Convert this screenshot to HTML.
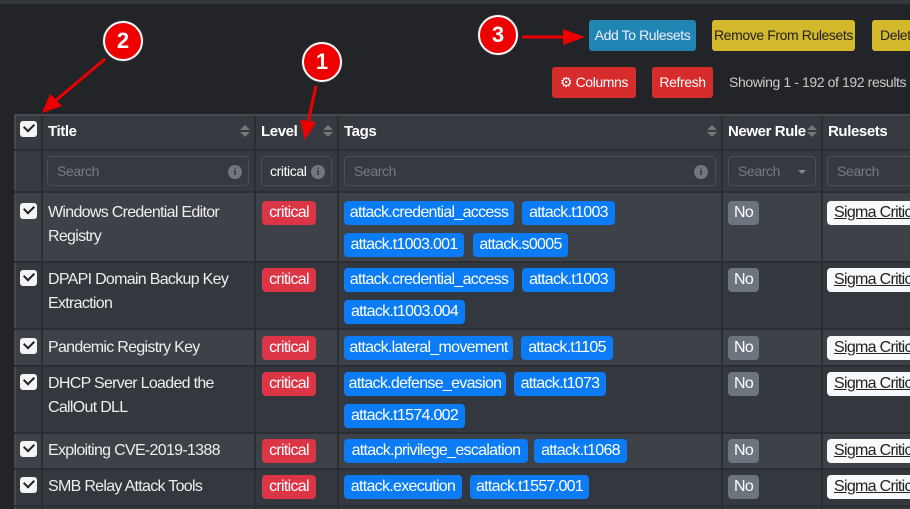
<!DOCTYPE html>
<html><head><meta charset="utf-8"><style>
*{margin:0;padding:0;box-sizing:border-box}
body{width:910px;height:509px;overflow:hidden;background:#222428;font-family:"Liberation Sans Narrow","Liberation Sans",sans-serif;color:#f0f0f0;position:relative;letter-spacing:-0.4px}
.a{position:absolute}
.b{position:absolute;border-radius:4px;font-size:16px;letter-spacing:-0.7px;line-height:24px;height:24px;text-align:center;white-space:nowrap;overflow:hidden}
.tag{background:#0b7cf5;color:#fff}
.crit{background:#dc3545;color:#fff;left:262px;width:54px}
.no{background:#6c757d;color:#fff;left:728px;width:31px}
.sig{background:#f8f9fa;color:#222;left:827px;width:100px;text-align:left;padding-left:7px;text-decoration:underline}
.t{position:absolute;left:48px;font-size:16px;letter-spacing:-0.7px;line-height:24px;color:#eee;white-space:nowrap}
.cb{position:absolute;left:20px;width:17px;height:16px;background:#f4f4f4;border-radius:3px}
.cb:after{content:"";position:absolute;left:4px;top:2px;width:8px;height:5px;border-left:2.5px solid #222;border-bottom:2.5px solid #222;transform:rotate(-45deg)}
.btn{position:absolute;border-radius:3px;font-size:14px;line-height:31px;height:31px;text-align:center;white-space:nowrap;overflow:hidden}
.inp{position:absolute;top:156px;height:30px;border:1px solid #4a4f55;border-radius:4px;font-size:14px;line-height:28px;color:#777c82;padding-left:9px;white-space:nowrap}
.info{position:absolute;top:8px;width:14px;height:14px;border-radius:50%;background:#72777d;color:#343a40;font-size:11px;line-height:14px;text-align:center;font-weight:bold;font-family:"Liberation Serif",serif;letter-spacing:0}
.h{position:absolute;top:114px;font-size:15px;font-weight:bold;line-height:36px;color:#fff;white-space:nowrap}
.sort{position:absolute;top:126px;width:0;height:0}
.sort:before{content:"";position:absolute;left:-5px;top:-1px;border:5px solid transparent;border-bottom:5px solid #777;border-top:0}
.sort:after{content:"";position:absolute;left:-5px;top:6px;border:5px solid transparent;border-top:5px solid #777;border-bottom:0}
.circ{position:absolute;width:40px;height:40px;border-radius:50%;background:#ee0000;border:2px solid #fff;box-shadow:0 0 0 1px #333;color:#fff;font:bold 22px/36px "Liberation Sans",sans-serif;text-align:center;letter-spacing:0}
</style></head><body>
<div class="a" style="left:0;top:0;width:910px;height:4px;background:#34383d"></div>
<div class="btn" style="left:589px;top:20px;width:107px;background:#2185b3;color:#eef">Add To Rulesets</div>
<div class="btn" style="left:712px;top:20px;width:143px;background:#d4b82b;color:#222">Remove From Rulesets</div>
<div class="btn" style="left:872px;top:20px;width:60px;background:#d4b82b;color:#222;text-align:left;padding-left:8px">Delete</div>
<div class="btn" style="left:552px;top:67px;width:84px;background:#d62c2c;color:#fff">⚙ Columns</div>
<div class="btn" style="left:652px;top:67px;width:61px;background:#d62c2c;color:#fff">Refresh</div>
<div class="a" style="left:729px;top:67px;font-size:14px;line-height:31px;color:#ccc;white-space:nowrap">Showing 1 - 192 of 192 results</div>
<div class="a" style="left:14px;top:114px;width:900px;height:395px;background:#2b2f34"></div>
<div class="a" style="left:14px;top:114px;width:900px;height:78px;background:#343a40"></div>
<div class="a" style="left:14px;top:193px;width:900px;height:69px;background:#3d4148"></div>
<div class="a" style="left:14px;top:262px;width:900px;height:67px;background:#33373e"></div>
<div class="a" style="left:14px;top:329px;width:900px;height:37px;background:#3d4148"></div>
<div class="a" style="left:14px;top:366px;width:900px;height:67px;background:#33373e"></div>
<div class="a" style="left:14px;top:433px;width:900px;height:36px;background:#3d4148"></div>
<div class="a" style="left:14px;top:469px;width:900px;height:40px;background:#33373e"></div>
<div class="a" style="left:14px;top:114px;width:2px;height:395px;background:#454a50"></div>
<div class="a" style="left:41px;top:114px;width:2px;height:395px;background:#2a2e33"></div>
<div class="a" style="left:254px;top:114px;width:2px;height:395px;background:#2a2e33"></div>
<div class="a" style="left:337px;top:114px;width:2px;height:395px;background:#2a2e33"></div>
<div class="a" style="left:721px;top:114px;width:2px;height:395px;background:#2a2e33"></div>
<div class="a" style="left:821px;top:114px;width:2px;height:395px;background:#2a2e33"></div>
<div class="a" style="left:14px;top:114px;width:900px;height:2px;background:#454a50"></div>
<div class="a" style="left:14px;top:149px;width:900px;height:2px;background:#2a2e33"></div>
<div class="a" style="left:14px;top:191px;width:900px;height:2px;background:#2a2e33"></div>
<div class="a" style="left:14px;top:261px;width:900px;height:2px;background:#2a2e33"></div>
<div class="a" style="left:14px;top:328px;width:900px;height:2px;background:#2a2e33"></div>
<div class="a" style="left:14px;top:365px;width:900px;height:2px;background:#2a2e33"></div>
<div class="a" style="left:14px;top:432px;width:900px;height:2px;background:#2a2e33"></div>
<div class="a" style="left:14px;top:468px;width:900px;height:2px;background:#2a2e33"></div>
<div class="a" style="left:14px;top:505px;width:900px;height:2px;background:#2a2e33"></div>
<div class="cb" style="top:121px"></div>
<div class="h" style="left:48px">Title</div><div class="sort" style="left:245px"></div>
<div class="h" style="left:261px">Level</div><div class="sort" style="left:328px"></div>
<div class="h" style="left:344px">Tags</div><div class="sort" style="left:712px"></div>
<div class="h" style="left:728px">Newer Rule</div><div class="sort" style="left:812px"></div>
<div class="h" style="left:828px">Rulesets</div>
<div class="inp" style="left:47px;width:202px">Search<div class="info" style="left:180px">i</div></div>
<div class="inp" style="left:261px;width:71px;color:#fff;padding-left:8px">critical<div class="info" style="left:49px">i</div></div>
<div class="inp" style="left:344px;width:372px">Search<div class="info" style="left:349px">i</div></div>
<div class="inp" style="left:728px;width:88px">Search<span style="position:absolute;left:69px;top:13px;border:4px solid transparent;border-top:4px solid #888"></span></div>
<div class="inp" style="left:827px;width:100px">Search</div>

<div class="cb" style="top:203px"></div><div class="t" style="top:201px">Windows Credential Editor<br>Registry</div>
<div class="b crit" style="top:201px">critical</div>
<div class="b tag" style="left:344px;top:201px;width:170px">attack.credential_access</div>
<div class="b tag" style="left:522px;top:201px;width:93px">attack.t1003</div>
<div class="b tag" style="left:344px;top:233px;width:120px">attack.t1003.001</div>
<div class="b tag" style="left:473px;top:233px;width:95px">attack.s0005</div>
<div class="b no" style="top:201px">No</div><div class="b sig" style="top:201px">Sigma Critical</div>

<div class="cb" style="top:270px"></div><div class="t" style="top:268px">DPAPI Domain Backup Key<br>Extraction</div>
<div class="b crit" style="top:268px">critical</div>
<div class="b tag" style="left:344px;top:268px;width:170px">attack.credential_access</div>
<div class="b tag" style="left:522px;top:268px;width:93px">attack.t1003</div>
<div class="b tag" style="left:344px;top:300px;width:121px">attack.t1003.004</div>
<div class="b no" style="top:268px">No</div><div class="b sig" style="top:268px">Sigma Critical</div>

<div class="cb" style="top:338px"></div><div class="t" style="top:336px">Pandemic Registry Key</div>
<div class="b crit" style="top:336px">critical</div>
<div class="b tag" style="left:344px;top:336px;width:169px">attack.lateral_movement</div>
<div class="b tag" style="left:521px;top:336px;width:92px">attack.t1105</div>
<div class="b no" style="top:336px">No</div><div class="b sig" style="top:336px">Sigma Critical</div>

<div class="cb" style="top:374px"></div><div class="t" style="top:372px">DHCP Server Loaded the<br>CallOut DLL</div>
<div class="b crit" style="top:372px">critical</div>
<div class="b tag" style="left:344px;top:372px;width:162px">attack.defense_evasion</div>
<div class="b tag" style="left:514px;top:372px;width:92px">attack.t1073</div>
<div class="b tag" style="left:344px;top:404px;width:121px">attack.t1574.002</div>
<div class="b no" style="top:372px">No</div><div class="b sig" style="top:372px">Sigma Critical</div>

<div class="cb" style="top:441px"></div><div class="t" style="top:439px">Exploiting CVE-2019-1388</div>
<div class="b crit" style="top:439px">critical</div>
<div class="b tag" style="left:344px;top:439px;width:184px">attack.privilege_escalation</div>
<div class="b tag" style="left:534px;top:439px;width:93px">attack.t1068</div>
<div class="b no" style="top:439px">No</div><div class="b sig" style="top:439px">Sigma Critical</div>

<div class="cb" style="top:477px"></div><div class="t" style="top:475px">SMB Relay Attack Tools</div>
<div class="b crit" style="top:475px">critical</div>
<div class="b tag" style="left:344px;top:475px;width:118px">attack.execution</div>
<div class="b tag" style="left:470px;top:475px;width:119px">attack.t1557.001</div>
<div class="b no" style="top:475px">No</div><div class="b sig" style="top:475px">Sigma Critical</div>

<svg class="a" style="left:0;top:0" width="910" height="509">
<g stroke="#ee0000" stroke-width="3" fill="#ee0000">
<line x1="105" y1="59" x2="55" y2="101"/><polygon points="42,113 50,94 62,106" stroke="none"/>
<line x1="316" y1="86" x2="308" y2="122"/><polygon points="305,140 300,120 316,122" stroke="none"/>
<line x1="522" y1="37" x2="565" y2="37"/><polygon points="585,37 563,29 563,45" stroke="none"/>
</g></svg>
<div class="circ" style="left:103px;top:21px">2</div>
<div class="circ" style="left:302px;top:42px">1</div>
<div class="circ" style="left:478px;top:15px">3</div>
</body></html>
